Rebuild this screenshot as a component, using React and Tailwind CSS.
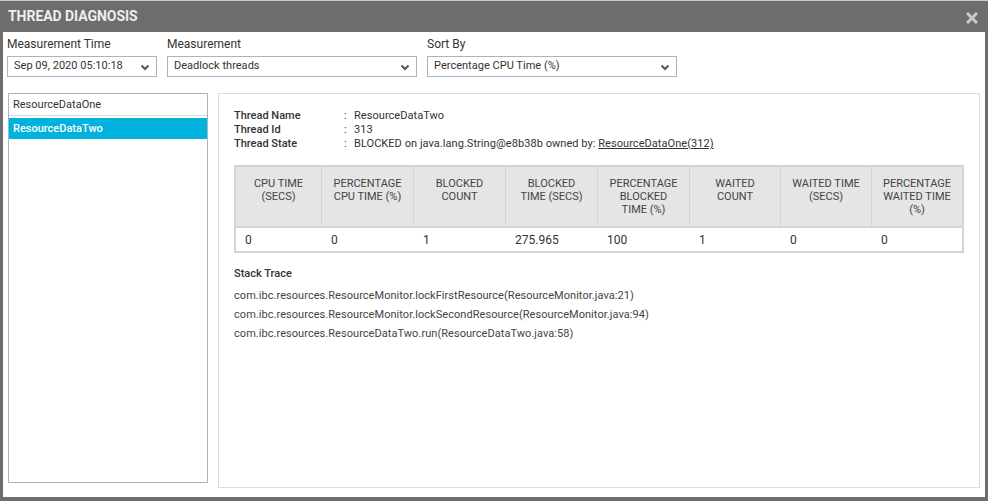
import React from 'react';

const columns = [
  { title: ['CPU TIME', '(SECS)'], value: '0', width: 'w-[85px]' },
  { title: ['PERCENTAGE', 'CPU TIME (%)'], value: '0', width: 'w-[92px]' },
  { title: ['BLOCKED', 'COUNT'], value: '1', width: 'w-[92px]' },
  { title: ['BLOCKED', 'TIME (SECS)'], value: '275.965', width: 'w-[92px]' },
  { title: ['PERCENTAGE', 'BLOCKED', 'TIME (%)'], value: '100', width: 'w-[92px]' },
  { title: ['WAITED', 'COUNT'], value: '1', width: 'w-[91px]' },
  { title: ['WAITED TIME', '(SECS)'], value: '0', width: 'w-[91px]' },
  { title: ['PERCENTAGE', 'WAITED TIME', '(%)'], value: '0', width: 'w-[91px]' },
];

const stackTrace = [
  'com.ibc.resources.ResourceMonitor.lockFirstResource(ResourceMonitor.java:21)',
  'com.ibc.resources.ResourceMonitor.lockSecondResource(ResourceMonitor.java:94)',
  'com.ibc.resources.ResourceDataTwo.run(ResourceDataTwo.java:58)',
];

// Filter dropdown with label on top
function Dropdown({ label, value, width }) {
  return (
    <div className={`${width} flex flex-col`}>
      <div className="h-[24px] text-[12px] leading-[24px] text-[#333]">{label}</div>
      <div className="h-[21px] flex items-center justify-between border border-[#a9b4c4] pl-[6px] pr-[6px] text-[11px] tracking-[0.02px] text-[#333]">
        <span>{value}</span>
        <svg width="10" height="7" viewBox="0 0 10 7" fill="none" className="mt-px">
          <path d="M1.5 1.5 L5 5 L8.5 1.5" stroke="#555" strokeWidth="2" />
        </svg>
      </div>
    </div>
  );
}

function InfoRow({ label, children }) {
  return (
    <div className="flex h-[14px] text-[11px] leading-[14px] text-[#333]">
      <div className="w-[110px] font-medium">{label}</div>
      <div className="w-[10px]">:</div>
      <div className="tracking-[0.05px]">{children}</div>
    </div>
  );
}

export default function App() {
  return (
    <div className="w-[988px] h-[501px] bg-[#6d6d6d] font-['Roboto',sans-serif] overflow-hidden">
      <div className="h-[501px] flex flex-col border-t border-[#c8c8c8]">
        {/* Title bar */}
        <div className="h-[31px] shrink-0 flex items-center justify-between pl-[8px] pr-[3px]">
          <h1 className="text-[14px] font-bold tracking-[-0.05px] text-[#eeeeee]">THREAD DIAGNOSIS</h1>
          <svg width="12" height="12" viewBox="0 0 12 12" className="mr-[7px] mt-[2px]" fill="none">
            <path d="M1 1 L11 11 M11 1 L1 11" stroke="#c9c9c9" strokeWidth="3" />
          </svg>
        </div>

        {/* Dialog body */}
        <div className="h-[465px] mx-[3px] bg-white pl-[4px] pr-[5px] flex flex-col">
          <div className="flex gap-[10px]">
            <Dropdown label="Measurement Time" value="Sep 09, 2020 05:10:18" width="w-[150px]" />
            <Dropdown label="Measurement" value="Deadlock threads" width="w-[250px]" />
            <Dropdown label="Sort By" value="Percentage CPU Time (%)" width="w-[250px]" />
          </div>

          <div className="flex mt-[16px] items-start">
            {/* Thread list */}
            <div className="w-[200px] h-[390px] ml-px border border-[#a9b4c4] text-[11px]">
              <div className="h-[22px] pl-[4px] leading-[21px] border-b border-[#dddddd] text-[#333]">ResourceDataOne</div>
              <div className="h-[21px] mt-[2px] pl-[4px] leading-[21px] bg-[#00b2dc] font-medium text-white">ResourceDataTwo</div>
            </div>

            {/* Detail panel */}
            <div className="w-[762px] h-[395px] ml-[10px] border border-[#dddddd] pt-[15px] pl-[15px]">
              <InfoRow label="Thread Name">ResourceDataTwo</InfoRow>
              <InfoRow label="Thread Id">313</InfoRow>
              <InfoRow label="Thread State">
                BLOCKED on java.lang.String@e8b38b owned by: <span className="underline">ResourceDataOne(312)</span>
              </InfoRow>

              <div className="w-[730px] mt-[14px] border-2 border-[#d4d4d4] flex">
                {columns.map((col, i) => (
                  <div key={i} className={`${col.width} flex flex-col`}>
                    <div className={`h-[61px] bg-[#e5e5e5] pt-[10px] text-center text-[11px] leading-[13px] text-[#444] border-b-2 border-[#d4d4d4] ${i > 0 ? 'border-l' : ''}`}>
                      {col.title.map((t) => <div key={t}>{t}</div>)}
                    </div>
                    <div className={`h-[23px] text-[12px] leading-[24px] text-[#333] bg-white ${i > 0 ? 'pl-[10px]' : 'pl-[9px]'}`}>{col.value}</div>
                  </div>
                ))}
              </div>

              <div className="mt-[14px] text-[11px] leading-[14px] font-medium text-[#333]">Stack Trace</div>
              <div className="mt-[5px] text-[11px] leading-[19px] tracking-[0.05px] text-[#444]">
                {stackTrace.map((line) => <div key={line}>{line}</div>)}
              </div>
            </div>
          </div>
        </div>
      </div>
    </div>
  );
}
